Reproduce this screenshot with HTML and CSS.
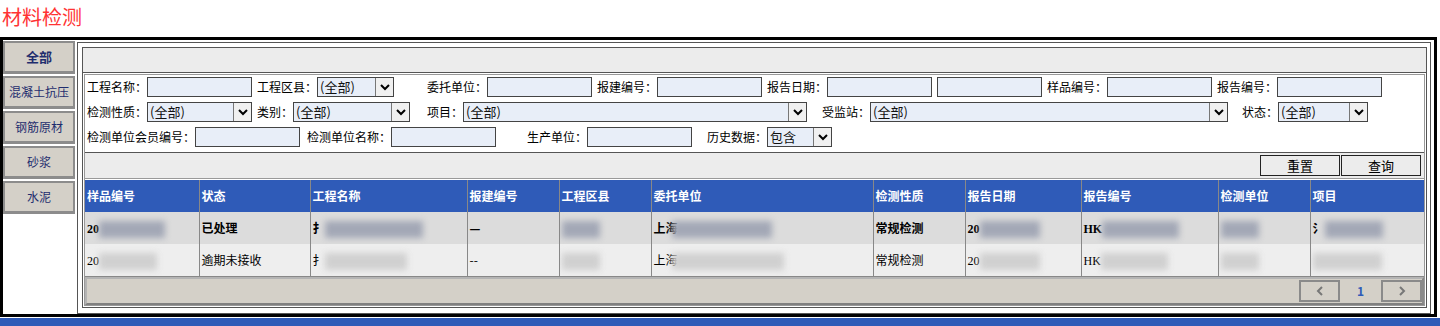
FILE: index.html
```html
<!DOCTYPE html>
<html lang="zh-CN">
<head>
    <meta charset="UTF-8">
    <title>材料检测</title>
    <link rel="stylesheet" href="styles.css">
</head>
<body>
<div class="title">材料检测</div>
<div class="main">
    <ul class="tabs">
        <li class="current">全部</li>
        <li>混凝土抗压</li>
        <li>钢筋原材</li>
        <li>砂浆</li>
        <li>水泥</li>
    </ul>
    <div class="content">
        <div class="hbar"></div>
        <div class="box">
            <div class="box-in">
                <div class="filters">
                    <div class="row">
                        <div class="fld w170"><label>工程名称：</label><input type="text"></div>
                        <div class="fld w170"><label>工程区县：</label><span class="sel s77"><span>(全部)</span><i><svg width="12" height="12" viewBox="0 0 12 12"><polyline points="2,4 6,8 10,4" fill="none" stroke="#000" stroke-width="2"/></svg></i></span></div>
                        <div class="fld w170"><label>委托单位：</label><input type="text"></div>
                        <div class="fld w170"><label>报建编号：</label><input type="text"></div>
                        <div class="fld w280"><label>报告日期：</label><input type="text"><input type="text"></div>
                        <div class="fld w170"><label>样品编号：</label><input type="text"></div>
                        <div class="fld w170"><label>报告编号：</label><input type="text"></div>
                    </div>
                    <div class="row">
                        <div class="fld w170"><label>检测性质：</label><span class="sel s105"><span>(全部)</span><i><svg width="12" height="12" viewBox="0 0 12 12"><polyline points="2,4 6,8 10,4" fill="none" stroke="#000" stroke-width="2"/></svg></i></span></div>
                        <div class="fld w170"><label>类别：</label><span class="sel s117"><span>(全部)</span><i><svg width="12" height="12" viewBox="0 0 12 12"><polyline points="2,4 6,8 10,4" fill="none" stroke="#000" stroke-width="2"/></svg></i></span></div>
                        <div class="fld w395"><label>项目：</label><span class="sel s344"><span>(全部)</span><i><svg width="12" height="12" viewBox="0 0 12 12"><polyline points="2,4 6,8 10,4" fill="none" stroke="#000" stroke-width="2"/></svg></i></span></div>
                        <div class="fld w420"><label>受监站：</label><span class="sel s358"><span>(全部)</span><i><svg width="12" height="12" viewBox="0 0 12 12"><polyline points="2,4 6,8 10,4" fill="none" stroke="#000" stroke-width="2"/></svg></i></span></div>
                        <div class="fld"><label>状态：</label><span class="sel s90"><span>(全部)</span><i><svg width="12" height="12" viewBox="0 0 12 12"><polyline points="2,4 6,8 10,4" fill="none" stroke="#000" stroke-width="2"/></svg></i></span></div>
                    </div>
                    <div class="row">
                        <div class="fld w220"><label>检测单位会员编号：</label><input type="text"></div>
                        <div class="fld w220"><label>检测单位名称：</label><input type="text"></div>
                        <div class="fld w180"><label>生产单位：</label><input type="text"></div>
                        <div class="fld"><label>历史数据：</label><span class="sel s65"><span>包含</span><i><svg width="12" height="12" viewBox="0 0 12 12"><polyline points="2,4 6,8 10,4" fill="none" stroke="#000" stroke-width="2"/></svg></i></span></div>
                    </div>
                </div>
                <div class="btnbar">
                    <button type="button">重置</button>
                    <button type="button">查询</button>
                </div>
                <table class="grid">
                    <colgroup>
                        <col class="c1"><col class="c2"><col class="c3"><col class="c4"><col class="c5"><col class="c6">
                        <col class="c7"><col class="c8"><col class="c9"><col class="c10"><col>
                    </colgroup>
                    <tr>
                        <th>样品编号</th><th>状态</th><th>工程名称</th><th>报建编号</th><th>工程区县</th><th>委托单位</th>
                        <th>检测性质</th><th>报告日期</th><th>报告编号</th><th>检测单位</th><th>项目</th>
                    </tr>
                    <tr class="on">
                        <td><span class="lat">20</span><span class="blur b66"></span></td>
                        <td>已处理</td>
                        <td>扌<span class="blur b98"></span></td>
                        <td>—</td>
                        <td><span class="blur b38"></span></td>
                        <td>上海<span class="blur b100 over"></span></td>
                        <td>常规检测</td>
                        <td><span class="lat">20</span><span class="blur b60"></span></td>
                        <td><span class="lat">HK</span><span class="blur b77"></span></td>
                        <td><span class="blur b38"></span></td>
                        <td>氵<span class="blur b58"></span></td>
                    </tr>
                    <tr class="off">
                        <td><span class="lat">20</span><span class="blur lt b58"></span></td>
                        <td>逾期未接收</td>
                        <td>扌<span class="blur lt b82"></span></td>
                        <td>--</td>
                        <td><span class="blur lt b38"></span></td>
                        <td>上海<span class="blur lt b112 over"></span></td>
                        <td>常规检测</td>
                        <td><span class="lat">20</span><span class="blur lt b60"></span></td>
                        <td><span class="lat">HK</span><span class="blur lt b67"></span></td>
                        <td><span class="blur lt b38"></span></td>
                        <td><span class="blur lt b69"></span></td>
                    </tr>
                </table>
                <div class="pager">
                    <span class="pbtn"><svg width="10" height="12" viewBox="0 0 10 12"><polyline points="7,2 3,6 7,10" fill="none" stroke="#777" stroke-width="2"/></svg></span>
                    <span class="pnum">1</span>
                    <span class="pbtn"><svg width="10" height="12" viewBox="0 0 10 12"><polyline points="3,2 7,6 3,10" fill="none" stroke="#777" stroke-width="2"/></svg></span>
                </div>
            </div>
        </div>
    </div>
</div>
<div class="foot"></div>
</body>
</html>
```

FILE: styles.css
```css
body, div, ul, li, table, th, td {
    margin: 0;
    padding: 0;
}

body {
    background: #fff;
    color: #000;
    font: 12px/20px "Noto Sans CJK SC", "Liberation Sans", sans-serif;
}

.title {
    height: 37px;
    padding-left: 2px;
    font-size: 20px;
    line-height: 34px;
    color: #f33;
}

.main {
    display: flex;
    align-items: flex-start;
    width: 1437px;
    box-sizing: border-box;
    border: 3px solid #000;
}

/* left tabs */
.tabs {
    list-style: none;
    width: 72px;
    flex-shrink: 0;
    padding-top: 1px;
}

.tabs li {
    height: 33px;
    box-sizing: border-box;
    margin-bottom: 2px;
    background: #d4d0c8;
    border: 2px solid #8c8c8c;
    border-bottom-width: 3px;
    color: #1f2d6e;
    text-align: center;
    line-height: 28px;
    cursor: pointer;
}

.tabs li.current {
    font-size: 13px;
    font-weight: 700;
}

.content {
    flex: 1;
    margin: 2px 3px 0 2px;
    border: 1px solid #555;
    padding: 4px 3px 5px 4px;
}

.hbar {
    height: 24px;
    background: #ececec;
    border: 1px solid #555;
}

.box {
    border: 1px solid #555;
    border-top: 0;
    padding: 1px;
}

.box-in {
    border: 1px solid #999;
}

/* filter form */
.filters {
    padding: 2px 0 5px 2px;
    background: #fff;
    border-bottom: 1px solid #555;
}

.row {
    display: flex;
    height: 20px;
}

.row + .row {
    margin-top: 5px;
}

.fld {
    display: flex;
    flex-shrink: 0;
}

.fld label {
    white-space: nowrap;
}

.w170 { width: 170px; }
.w180 { width: 180px; }
.w220 { width: 220px; }
.w280 { width: 280px; }
.w395 { width: 395px; }
.w420 { width: 420px; }

input {
    width: 105px;
    height: 20px;
    box-sizing: border-box;
    margin: 0 5px 0 0;
    padding: 0 2px;
    border: 1px solid #444;
    background: #e8eef8;
    font: inherit;
}

.sel {
    display: flex;
    height: 20px;
    box-sizing: border-box;
    padding-left: 2px;
    border: 1px solid #444;
    background: #e8eef8;
    color: #111;
    font-size: 13px;
    line-height: 18px;
}

.sel span {
    flex: 1;
    white-space: nowrap;
}

.sel i {
    display: flex;
    align-items: center;
    justify-content: center;
    width: 18px;
    height: 18px;
    box-sizing: border-box;
    background: #f0f0f0;
    border-left: 1px solid #777;
}

.s65 { width: 65px; }
.s77 { width: 77px; }
.s90 { width: 90px; }
.s105 { width: 105px; }
.s117 { width: 117px; }
.s344 { width: 344px; }
.s358 { width: 358px; }

.btnbar {
    display: flex;
    justify-content: flex-end;
    gap: 1px;
    padding: 2px 3px 2px 0;
    background: #ececec;
    border-bottom: 1px solid #999;
    margin-bottom: 1px;
}

button {
    width: 80px;
    height: 21px;
    padding: 0;
    border: 1px solid #222;
    background: #ececec;
    font: 13px/19px "Noto Sans CJK SC", sans-serif;
    cursor: pointer;
}

/* result table */
.grid {
    width: 100%;
    table-layout: fixed;
    border-collapse: collapse;
    border-bottom: 1px solid #888;
}

.c1 { width: 114px; }
.c2 { width: 111px; }
.c3 { width: 157px; }
.c4 { width: 92px; }
.c5 { width: 92px; }
.c6 { width: 222px; }
.c7 { width: 92px; }
.c8 { width: 116px; }
.c9 { width: 137px; }
.c10 { width: 92px; }

.grid th, .grid td {
    height: 32px;
    padding: 0 0 0 2px;
    text-align: left;
    white-space: nowrap;
    overflow: hidden;
    border-left: 1px solid #888;
}

.grid th:first-child, .grid td:first-child {
    border-left: 0;
}

.grid th {
    background: #2f5bb8;
    color: #fff;
    font-weight: 700;
}

.grid tr.on td {
    background: #dcdcdc;
    font-weight: 700;
}

.grid tr.off td {
    background: #eee;
}

.lat {
    font-family: "Liberation Serif", serif;
}

.blur {
    display: inline-block;
    vertical-align: middle;
    height: 17px;
    background: #a3a8b6;
    filter: blur(3px);
}

.blur.lt {
    background: #d0d0d0;
}

.blur.over {
    margin-left: -6px;
}

.b38 { width: 38px; }
.b58 { width: 58px; }
.b60 { width: 60px; }
.b66 { width: 66px; }
.b67 { width: 67px; }
.b69 { width: 69px; }
.b77 { width: 77px; }
.b82 { width: 82px; }
.b98 { width: 98px; }
.b100 { width: 100px; }
.b112 { width: 112px; }

.pager {
    display: flex;
    justify-content: flex-end;
    align-items: center;
    height: 24px;
    background: #d4d0c8;
    border: 2px solid;
    border-color: #b4b4b4 #8a8a8a #808080 #b4b4b4;
}

.pbtn {
    display: flex;
    align-items: center;
    justify-content: center;
    width: 41px;
    height: 22px;
    box-sizing: border-box;
    border: 2px solid #8a8a8a;
    cursor: pointer;
}

.pnum {
    width: 41px;
    text-align: center;
    color: #2f5bb8;
    font-weight: 700;
}

.foot {
    height: 9px;
    margin-top: 1px;
    background: #2f5bb8;
}
```
